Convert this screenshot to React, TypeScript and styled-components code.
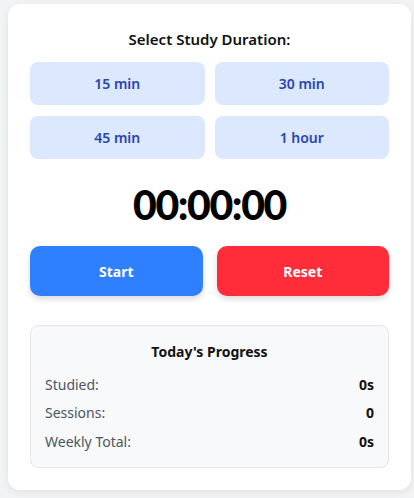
import React, { useState } from "react";
import styled, { createGlobalStyle } from "styled-components";

const Global = createGlobalStyle`
  html, body { margin: 0; padding: 0; background: #f2f3f5; }
  body { font-family: "Noto Sans", "Open Sans", sans-serif; }
  * { box-sizing: border-box; }
`;

const Page = styled.div`
  padding: 4px 3px 10px 8px;
`;

const Card = styled.div`
  background: #ffffff;
  border-radius: 12px;
  box-shadow: 0 2px 8px rgba(0, 0, 0, 0.08);
  padding: 24px 22px 22px;
  display: flex;
  flex-direction: column;
`;

const Title = styled.h2`
  margin: 0 0 12px;
  font-size: 15px;
  line-height: 22px;
  font-weight: 600;
  text-align: center;
  color: #111;
`;

const Grid = styled.div`
  display: grid;
  grid-template-columns: 1fr 1fr;
  gap: 11px 10px;
`;

const DurationButton = styled.button`
  height: 43px;
  border: none;
  border-radius: 8px;
  background: #dbe8fe;
  color: #2a44b0;
  font-family: inherit;
  font-size: 14px;
  font-weight: 600;
  cursor: pointer;
`;

const Timer = styled.div`
  margin-top: 20px;
  text-align: center;
  font-family: Lato, "Noto Sans", sans-serif;
  font-size: 41px;
  line-height: 52px;
  font-weight: 900;
  letter-spacing: -1.4px;
  color: #000;
`;

const Controls = styled.div`
  margin-top: 15px;
  display: grid;
  grid-template-columns: 1fr 1fr;
  gap: 14px;
`;

const ControlButton = styled.button<{ $tone: "start" | "reset" }>`
  height: 50px;
  border: none;
  border-radius: 10px;
  background: ${(p) => (p.$tone === "start" ? "#2f80ff" : "#ff2c39")};
  color: #fff;
  font-family: inherit;
  font-size: 14px;
  font-weight: 700;
  box-shadow: 0 3px 6px rgba(0, 0, 0, 0.15);
  cursor: pointer;
`;

const Progress = styled.div`
  margin-top: 29px;
  background: #f8f9fb;
  border: 1px solid #e4e6ea;
  border-radius: 8px;
  padding: 16px 14px 11px;
`;

const ProgressTitle = styled.h3`
  margin: 0 0 8px;
  font-size: 14px;
  line-height: 20px;
  font-weight: 700;
  text-align: center;
  color: #111;
`;

const Row = styled.div`
  display: flex;
  justify-content: space-between;
  align-items: center;
  height: 28.5px;
  font-size: 14px;
`;

const Label = styled.span`
  color: #4b5563;
`;

const Value = styled.span`
  color: #111;
  font-weight: 700;
`;

export default function App() {
  const [seconds] = useState(0);
  const durations = ["15 min", "30 min", "45 min", "1 hour"];
  const fmt = (s: number) => {
    const h = String(Math.floor(s / 3600)).padStart(2, "0");
    const m = String(Math.floor((s % 3600) / 60)).padStart(2, "0");
    const sec = String(s % 60).padStart(2, "0");
    return `${h}:${m}:${sec}`;
  };
  return (
    <>
      <Global />
      <Page>
        <Card>
          <Title>Select Study Duration:</Title>
          <Grid>
            {durations.map((d) => (
              <DurationButton key={d}>{d}</DurationButton>
            ))}
          </Grid>
          <Timer>{fmt(seconds)}</Timer>
          <Controls>
            <ControlButton $tone="start">Start</ControlButton>
            <ControlButton $tone="reset">Reset</ControlButton>
          </Controls>
          <Progress>
            <ProgressTitle>Today's Progress</ProgressTitle>
            <Row>
              <Label>Studied:</Label>
              <Value>0s</Value>
            </Row>
            <Row>
              <Label>Sessions:</Label>
              <Value>0</Value>
            </Row>
            <Row>
              <Label>Weekly Total:</Label>
              <Value>0s</Value>
            </Row>
          </Progress>
        </Card>
      </Page>
    </>
  );
}
